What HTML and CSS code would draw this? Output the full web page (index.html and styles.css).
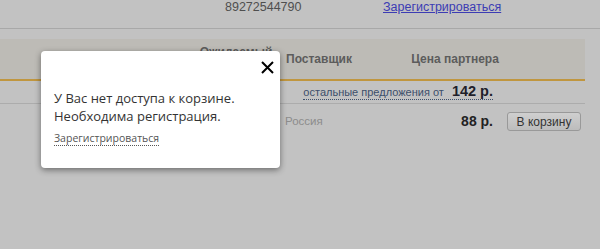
FILE: index.html
```html
<!DOCTYPE html>
<html lang="ru">
<head>
<meta charset="utf-8">
<title>Корзина</title>
<link rel="stylesheet" href="styles.css">
</head>
<body>
<div class="page">
  <div class="topbar">
    <span class="phone">89272544790</span>
    <a class="reg-link" href="#">Зарегистрироваться</a>
  </div>
  <div class="table">
    <div class="thead">
      <div class="th th-empty"></div>
      <div class="th th-expected">Ожидаемый<br>срок</div>
      <div class="th th-supplier">Поставщик</div>
      <div class="th th-price">Цена партнера</div>
      <div class="th"></div>
    </div>
    <div class="row row-offers">
      <a class="offers" href="#">остальные предложения от <b class="offer-price">142 р.</b></a>
    </div>
    <div class="row row-item">
      <div class="cell"></div>
      <div class="cell"></div>
      <div class="cell supplier">Россия</div>
      <div class="cell price">88 р.</div>
      <div class="cell buy"><button class="btn">В корзину</button></div>
    </div>
  </div>
</div>

<div class="popup">
  <button class="close" aria-label="Закрыть">
    <svg width="13" height="13" viewBox="0 0 13 13"><path d="M1 1 L12 12 M12 1 L1 12" stroke="#000" stroke-width="2" fill="none"/></svg>
  </button>
  <p class="msg">У Вас нет доступа к корзине.<br>Необходима регистрация.</p>
  <a class="popup-link" href="#">Зарегистрироваться</a>
</div>
</body>
</html>
```

FILE: styles.css
```css
html, body {
  margin: 0;
  padding: 0;
}
body {
  background: #c2c2c2;
  font-family: "Liberation Sans", Arial, sans-serif;
  width: 600px;
  height: 249px;
  overflow: hidden;
  position: relative;
}
.page {
  width: 600px;
}
.topbar {
  height: 29px;
  border-bottom: 1px solid #a8a8a8;
  display: flex;
  align-items: flex-start;
  padding-left: 225px;
  box-sizing: border-box;
}
.phone {
  font-size: 12.5px;
  line-height: 15px;
  color: #4f4f4f;
  width: 158px;
}
.reg-link {
  font-size: 12.5px;
  line-height: 15px;
  color: #3c3cb4;
  text-decoration: underline;
}
.table {
  width: 585px;
  margin-top: 10px;
}
.thead {
  height: 40px;
  background: #bdbbb6;
  border-bottom: 2px solid #c0963f;
  display: grid;
  grid-template-columns: 190px 92px 118px 110px 75px;
}
.th {
  font-weight: bold;
  font-size: 12px;
  color: #5c5c5c;
  display: flex;
  align-items: center;
}
.th-expected {
  align-items: flex-start;
  justify-content: center;
  text-align: center;
  padding-top: 6px;
  line-height: 14px;
}
.th-supplier {
  padding-left: 4px;
}
.th-price {
  justify-content: center;
}
.row {
  display: grid;
  grid-template-columns: 190px 92px 118px 110px 75px;
}
.row-offers {
  height: 22px;
  border-bottom: 1px solid #acacac;
  align-items: center;
}
.offers {
  grid-column: 3 / 5;
  justify-self: end;
  margin-right: 17px;
  font-size: 11px;
  color: #3d4f6b;
  text-decoration: none;
  border-bottom: 1px dotted #3d4f6b;
  line-height: 14px;
}
.offer-price {
  font-size: 14.5px;
  color: #1e1e2a;
  margin-left: 5px;
}
.row-item {
  padding-top: 8px;
  height: 27px;
  align-items: start;
}
.cell {
  font-size: 12px;
  line-height: 19px;
}
.supplier {
  padding-left: 3px;
  color: #8c8c8c;
  font-size: 11.5px;
}
.price {
  text-align: right;
  padding-right: 17px;
  font-weight: bold;
  font-size: 14px;
  color: #222;
}
.btn {
  margin-left: -3px;
  width: 74px;
  height: 19px;
  padding: 0;
  font-family: "Liberation Sans", Arial, sans-serif;
  font-size: 12px;
  color: #333;
  background: linear-gradient(#cfcfcf, #bcbcbc);
  border: 1px solid #999;
  border-radius: 3px;
}
.popup {
  position: absolute;
  left: 41px;
  top: 51px;
  width: 239px;
  height: 117px;
  box-sizing: border-box;
  background: #fff;
  border-radius: 4px;
  box-shadow: 0 2px 6px rgba(0, 0, 0, 0.45);
  padding: 38px 10px 0 13px;
  font-family: "Open Sans", sans-serif;
}
.close {
  position: absolute;
  right: 6px;
  top: 10px;
  width: 13px;
  height: 13px;
  padding: 0;
  border: 0;
  background: none;
  display: block;
}
.close svg {
  display: block;
}
.msg {
  margin: 0;
  font-size: 13px;
  line-height: 18px;
  color: #333;
}
.popup-link {
  display: inline-block;
  margin-top: 4px;
  font-size: 10.5px;
  line-height: 13px;
  color: #555;
  text-decoration: none;
  border-bottom: 1px dotted #555;
}
```
